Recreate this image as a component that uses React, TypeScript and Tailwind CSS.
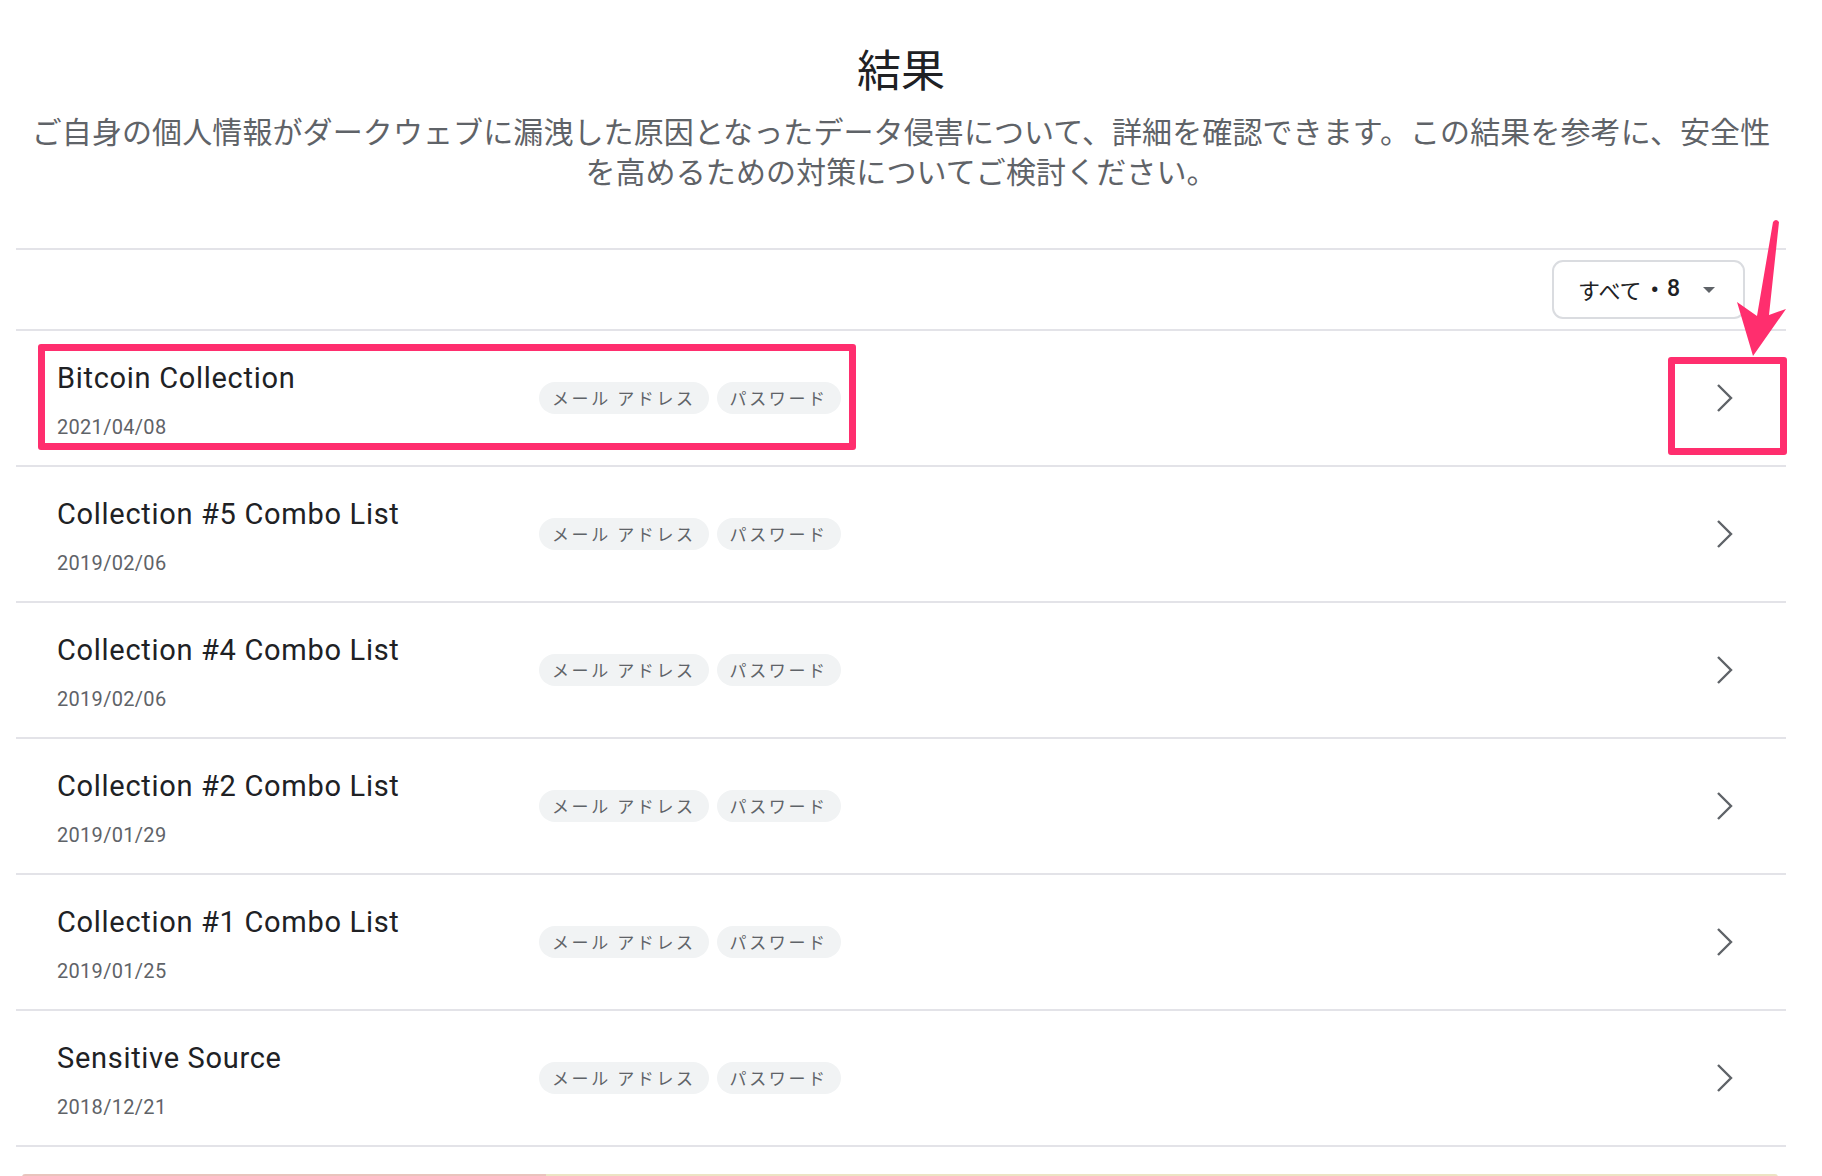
const BREACHES = [
  { name: 'Bitcoin Collection', date: '2021/04/08' },
  { name: 'Collection #5 Combo List', date: '2019/02/06' },
  { name: 'Collection #4 Combo List', date: '2019/02/06' },
  { name: 'Collection #2 Combo List', date: '2019/01/29' },
  { name: 'Collection #1 Combo List', date: '2019/01/25' },
  { name: 'Sensitive Source', date: '2018/12/21' },
]

const TAGS = ['メール アドレス', 'パスワード']

const JP = "font-['Noto_Sans_CJK_JP',sans-serif]"

function ChevronRight() {
  return (
    <svg width="24" height="32" viewBox="0 0 24 32" className="shrink-0">
      <polyline
        points="5,3 18,16 5,29"
        fill="none"
        stroke="#5f6368"
        strokeWidth="2.4"
        strokeLinejoin="miter"
      />
    </svg>
  )
}

function BreachRow({ name, date }: { name: string; date: string }) {
  return (
    <div className="flex items-center h-[136px] border-b-2 border-[#e3e3e8] pl-[41px] pr-[49px]">
      <div className="w-[482px] shrink-0 flex flex-col gap-[18px] pt-[3px]">
        <div className="font-['Roboto',sans-serif] text-[29px] leading-[36px] tracking-[0.7px] text-[#202124]">
          {name}
        </div>
        <div className="font-['Roboto',sans-serif] text-[20px] leading-[26px] text-[#5f6368] tracking-[0.3px]">
          {date}
        </div>
      </div>
      <div className="flex gap-[8px]">
        {TAGS.map((t) => (
          <span
            key={t}
            className={`${JP} h-[32px] px-[13px] flex items-center rounded-full bg-[#f1f3f4] text-[17px] tracking-[2.6px] text-[#5f6368]`}
          >
            {t}
          </span>
        ))}
      </div>
      <div className="ml-auto">
        <ChevronRight />
      </div>
    </div>
  )
}

export default function App() {
  return (
    <div className="bg-white min-h-screen overflow-hidden h-[1176px]">
      <div className="relative ml-[16px] w-[1770px]">
        <h1 className={`${JP} pt-[40px] text-center text-[44px] leading-[56px] font-normal text-[#202124]`}>
          結果
        </h1>
        <p className={`${JP} mt-[14px] text-center text-[30px] leading-[40px] tracking-[0.1px] text-[#5f6368]`}>
          ご自身の個人情報がダークウェブに漏洩した原因となったデータ侵害について、詳細を確認できます。この結果を参考に、安全性
          <br />
          を高めるための対策についてご検討ください。
        </p>

        <div className="mt-[58px] border-y-2 border-[#e3e3e8] flex justify-end py-[10px] pr-[41px]">
          <button className="h-[59px] w-[193px] rounded-[11px] border-2 border-[#dadce0] flex items-center pl-[24px] pr-[28px]">
            <span className={`${JP} text-[22px] text-[#202124]`}>すべて</span>
            <span className="font-['Roboto',sans-serif] text-[24px] font-medium text-[#202124] ml-[9px]">•</span>
            <span className="font-['Roboto',sans-serif] text-[23px] font-medium text-[#202124] ml-[8px]">8</span>
            <svg width="12" height="6" viewBox="0 0 12 6" className="ml-auto">
              <path d="M0 0h12L6 6z" fill="#5f6368" />
            </svg>
          </button>
        </div>

        {BREACHES.map((b) => (
          <BreachRow key={b.name} name={b.name} date={b.date} />
        ))}

        <div className="mt-[27px] ml-[6px] mr-[8px] flex h-[4px] rounded-t-[3px] overflow-hidden">
          <div className="w-[524px] bg-[#e9c4bd]" />
          <div className="flex-1 bg-[#ece4c4]" />
        </div>

        {/* annotation overlays */}
        <div className="absolute left-[22px] top-[344px] w-[818px] h-[106px] border-[7px] border-[#ff2e6e] rounded-[3px]" />
        <div className="absolute left-[1652px] top-[357px] w-[119px] h-[98px] border-[7px] border-[#ff2e6e] rounded-[3px]" />
        <svg className="absolute left-[1698px] top-[210px]" width="80" height="160" viewBox="1714 210 80 160">
          <path
            d="M1773 222 Q1776 218 1779 222 L1769 315 L1786 309 L1753 356 L1737 302 L1757 316 Z"
            fill="#ff2e6e"
          />
        </svg>
      </div>
    </div>
  )
}
